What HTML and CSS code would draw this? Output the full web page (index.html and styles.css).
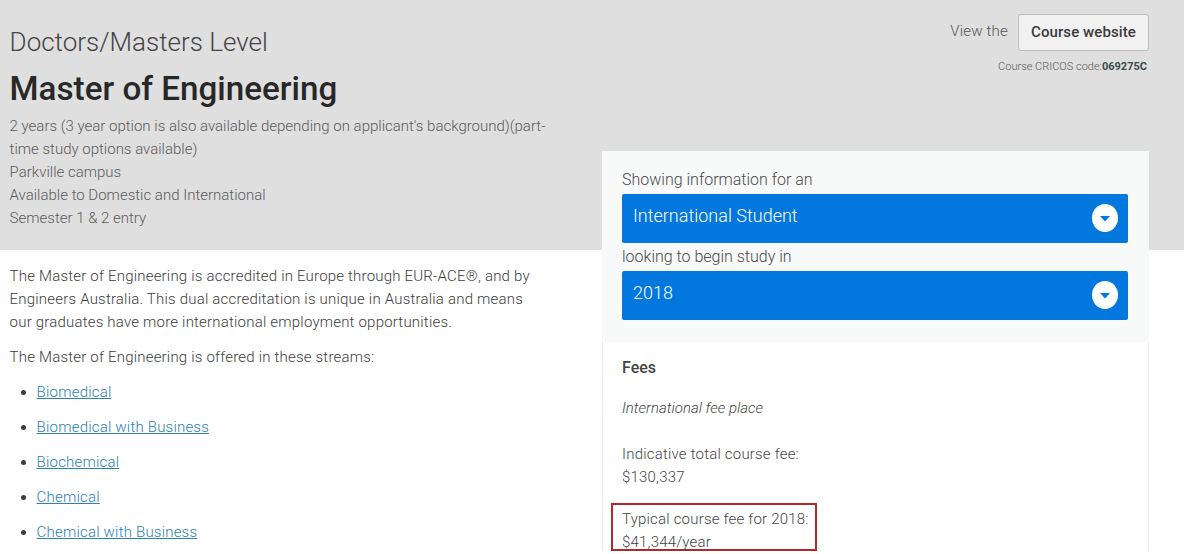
FILE: index.html
```html
<!DOCTYPE html>
<html lang="en">
<head>
<meta charset="utf-8">
<title>Master of Engineering</title>
<link rel="stylesheet" href="styles.css">
</head>
<body>
<div class="page">
  <div class="main">
    <header class="intro">
      <div class="level">Doctors/Masters Level</div>
      <h1 class="title">Master of Engineering</h1>
      <p class="facts">2 years (3 year option is also available depending on applicant's background)(part-time study options available)<br>Parkville campus<br>Available to Domestic and International<br>Semester 1 &amp; 2 entry</p>
    </header>
    <section class="body">
      <p class="para">The Master of Engineering is accredited in Europe through EUR-ACE®, and by Engineers Australia. This dual accreditation is unique in Australia and means our graduates have more international employment opportunities.</p>
      <p class="para">The Master of Engineering is offered in these streams:</p>
      <ul class="streams">
        <li><a href="#">Biomedical</a></li>
        <li><a href="#">Biomedical with Business</a></li>
        <li><a href="#">Biochemical</a></li>
        <li><a href="#">Chemical</a></li>
        <li><a href="#">Chemical with Business</a></li>
      </ul>
    </section>
  </div>
  <aside class="side">
    <div class="site-row">
      <span class="view">View the</span>
      <a class="site-btn" href="#">Course website</a>
    </div>
    <div class="cricos">Course CRICOS code:<b>069275C</b></div>
    <div class="panel">
      <div class="chooser">
        <div class="label">Showing information for an</div>
        <div class="select">
          <span>International Student</span>
          <svg class="caret" viewBox="0 0 26 28" width="28" height="28"><ellipse cx="13" cy="14" rx="13" ry="14" fill="#fff"/><path d="M8 12h10l-5 5.5z" fill="#0277dd"/></svg>
        </div>
        <div class="label label-tight">looking to begin study in</div>
        <div class="select">
          <span>2018</span>
          <svg class="caret" viewBox="0 0 26 28" width="28" height="28"><ellipse cx="13" cy="14" rx="13" ry="14" fill="#fff"/><path d="M8 12h10l-5 5.5z" fill="#0277dd"/></svg>
        </div>
      </div>
      <div class="fees">
        <h2 class="fees-title">Fees</h2>
        <p class="place">International fee place</p>
        <p class="fee">Indicative total course fee:<br>$130,337</p>
        <p class="fee fee-marked">Typical course fee for 2018:<br>$41,344/year</p>
      </div>
    </div>
  </aside>
</div>
</body>
</html>
```
FILE: styles.css
```css
html, body {
  margin: 0;
  height: 554px;
  overflow: hidden;
  background: #fff;
}
body {
  font-family: Roboto, "Liberation Sans", sans-serif;
  font-size: 15px;
  line-height: 23px;
  font-weight: 300;
  color: #3c3c3c;
}
.page {
  display: flex;
  height: 554px;
  overflow: hidden;
  background: linear-gradient(#dfdfdf 0, #dfdfdf 250px, #fff 250px);
}
.main {
  width: 602px;
  flex: none;
  box-sizing: border-box;
  padding-left: 9.6px;
}
.intro {
  height: 250px;
  box-sizing: border-box;
  padding-top: 25px;
  width: 545px;
}
.level {
  font-size: 26px;
  line-height: 34px;
  color: #444;
}
.title {
  margin: 10px 0 0;
  font-size: 33.2px;
  line-height: 40px;
  font-weight: 500;
  color: #282828;
}
.facts {
  margin: 6px 0 0;
  color: #5a5a5a;
}
.body {
  width: 525px;
  padding-top: 15px;
  letter-spacing: .2px;
}
.para {
  margin: 0 0 12px;
}
.streams {
  margin: 0;
  padding: 0 0 0 27px;
}
.streams li {
  margin-bottom: 12px;
}
.streams a {
  color: #2a7fb5;
}
.side {
  width: 547px;
  flex: none;
  display: flex;
  flex-direction: column;
}
.site-row {
  display: flex;
  justify-content: flex-end;
  align-items: center;
  gap: 10px;
  padding-top: 14px;
}
.view {
  color: #555;
  margin-top: -3px;
  letter-spacing: .2px;
}
.site-btn {
  display: block;
  box-sizing: border-box;
  height: 37px;
  padding: 6px 12px;
  border: 1px solid #bdbdbd;
  border-radius: 3px;
  background: #f1f1f1;
  font-weight: 500;
  font-size: 15px;
  letter-spacing: .1px;
  color: #3a3a3a;
  text-decoration: none;
}
.cricos {
  text-align: right;
  font-size: 11px;
  line-height: 14px;
  padding: 9px 2px 0 0;
  color: #555;
}
.cricos b {
  font-weight: 700;
  color: #3a4a4a;
}
.panel {
  margin-top: 77px;
}
.chooser {
  background: #f8f9f9;
  padding: 14px 21px 22px 20px;
}
.label {
  font-size: 16px;
  line-height: 29px;
  color: #4a4a4a;
}
.label-tight {
  line-height: 28px;
}
.select {
  height: 49px;
  box-sizing: border-box;
  display: flex;
  justify-content: space-between;
  padding: 10px 9px 0 11px;
  background: #0277dd;
  border-radius: 2px;
  color: #fff;
  font-size: 18px;
  line-height: 24px;
  font-weight: 300;
}
.caret {
  display: block;
}
.fees {
  padding: 14px 19px 0;
  background: #fff;
  border-left: 1px solid #e9e9e9;
  border-right: 1px solid #e9e9e9;
  letter-spacing: .2px;
}
.fees-title {
  margin: 0;
  font-size: 16px;
  line-height: 24px;
  font-weight: 500;
  letter-spacing: 0;
  color: #444;
}
.place {
  margin: 17px 0 0;
  font-style: italic;
  letter-spacing: 0;
  color: #444;
}
.fee {
  margin: 23px 0 0;
  color: #444;
}
.fee-marked {
  box-sizing: border-box;
  margin: 14px 0 0 -11px;
  padding: 3px 0 0 9px;
  width: 206px;
  height: 48px;
  border: 2px solid #b02a2a;
}
```
